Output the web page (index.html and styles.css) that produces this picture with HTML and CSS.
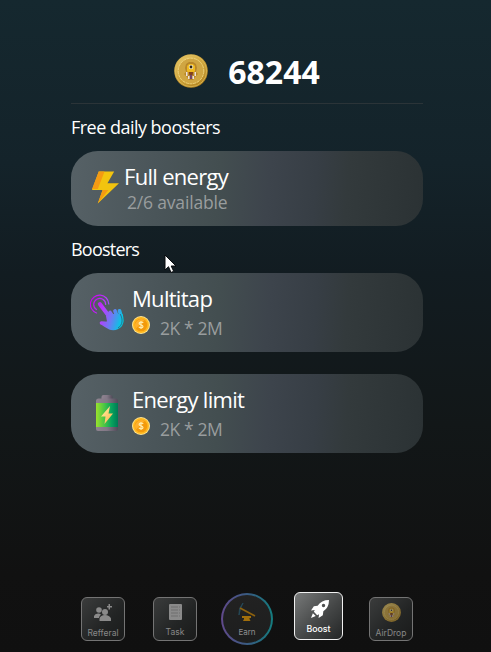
FILE: index.html
```html
<!DOCTYPE html>
<html lang="en">
<head>
<meta charset="utf-8">
<title>Boost</title>
<link rel="stylesheet" href="styles.css">
</head>
<body>
<svg class="defs" aria-hidden="true">
  <defs>
    <radialGradient id="gold" cx=".4" cy=".35" r=".7"><stop offset="0" stop-color="#f4dc83"/><stop offset=".65" stop-color="#d0a53c"/><stop offset="1" stop-color="#a97916"/></radialGradient>
    <linearGradient id="hand" x1="0" x2="34" y1="10" y2="20" gradientUnits="userSpaceOnUse"><stop offset="0" stop-color="#c900ef"/><stop offset=".4" stop-color="#b83cff"/><stop offset=".68" stop-color="#7078f4"/><stop offset="1" stop-color="#00cbe2"/></linearGradient>
    <linearGradient id="green"><stop offset="0" stop-color="#9be22c"/><stop offset=".4" stop-color="#45c447"/><stop offset=".7" stop-color="#08a45d"/><stop offset="1" stop-color="#007a55"/></linearGradient>
    <linearGradient id="cap"><stop offset="0" stop-color="#8f8390"/><stop offset=".5" stop-color="#827886"/><stop offset="1" stop-color="#514b59"/></linearGradient>
    <linearGradient id="spark" x1="0" x2="1" y1="0" y2="1"><stop offset="0" stop-color="#fff6a8"/><stop offset="1" stop-color="#ffac45"/></linearGradient>
    <symbol id="medal" viewBox="0 0 34 34">
      <circle cx="17" cy="17" r="16.8" fill="url(#gold)"/>
      <circle cx="17" cy="17" r="15.7" fill="none" stroke="#dfc063" stroke-width=".7"/>
      <circle cx="17" cy="17" r="12.8" fill="#d0a642" stroke="#efd680" stroke-width=".9" stroke-dasharray="3 .7"/>
      <path d="M11 14l1-4 3-2h4l3 2 1 4-1 4 2 2-3 3-2 3h-4l-2-3-3-3 2-2z" fill="#b88628"/>
      <path d="M13 17v-5l2-2h4l2 2v5l-2 3h-4z" fill="#efb91f"/>
      <circle cx="17" cy="13" r="2.3" fill="#f5e9bd"/><circle cx="17" cy="13" r="1.4" fill="#312516"/>
      <path d="M12 18h1.5v4H12zm8.5 0H22v4h-1.500zM14 22h1.500v3H14zm4.500 0H20v3h-1.500z" fill="#eee2dc"/>
      <path d="M14.500 18h5l-1 3h-3z" fill="#82411e"/><path d="M16 21h2v4h-2z" fill="#744765"/>
    </symbol>
    <symbol id="dollar" viewBox="0 0 18 18">
      <circle cx="9" cy="9" r="9" fill="#ffe491"/><circle cx="9" cy="9" r="8" fill="#ffb820"/><circle cx="9" cy="9" r="6.300" fill="#f39a0c"/><path d="M4 12.500A6.200 6.200 0 0 1 12.500 4z" fill="#ffb02c"/>
      <path d="M11.200 7C10.600 5.900 7.200 5.700 7.100 7.300c-.1 1.900 4 1.300 3.900 3.300-.1 1.700-3.400 1.600-4.200.2M9 5v8" fill="none" stroke="#ffeaa8" stroke-width="1.200"/>
    </symbol>
  </defs>
</svg>
<main>
  <header class="balance">
    <svg class="medal"><use href="#medal"/></svg>
    <strong>68244</strong>
  </header>
  <h2 class="free">Free daily boosters</h2>
  <section class="card daily">
    <svg class="bolt" viewBox="0 0 28 34"><path d="M7 0H23L16 12H28L6 33 11 19H0z" fill="#f2c40f"/><path d="M7 0H13L6 18H0zM11 19H17L6 33z" fill="#f49a13"/></svg>
    <div><h3>Full energy</h3><p>2/6 available</p></div>
  </section>
  <h2 class="paid">Boosters</h2>
  <section class="card">
    <svg class="tap" viewBox="0 0 35 38">
      <g fill="none" stroke="url(#hand)" stroke-linecap="round">
        <path d="M6.500 19A9.200 9.200 0 1 1 18.800 10M6.500 15.500A6 6 0 1 1 15.700 10.400" stroke-width="1.200"/>
        <path d="M9.800 10L20 23.500" stroke-width="4"/>
        <path d="M20 18.500L23 23M25 17L27 22M29.500 16.800L31 22" stroke-width="3.700"/>
        <path d="M11.500 29L18 29.500" stroke-width="3.600"/>
      </g>
      <path d="M16 22l4-2 12.500 0q2.500 7-.5 12-4 5-11 4-3-.6-10-5.500l6-3z" fill="url(#hand)"/>
      <path d="M30.200 20c3 5.500 2.500 11-2.200 14" fill="none" stroke="#3a5c79" stroke-width=".8"/>
    </svg>
    <div><h3 class="multi">Multitap</h3><p class="price"><svg class="coin"><use href="#dollar"/></svg><span>2K * 2M</span></p></div>
  </section>
  <section class="card">
    <svg class="battery" viewBox="0 0 22 36">
      <path d="M5.500 4V2q0-2 2-2h7q2 0 2 2v2z" fill="url(#cap)"/><path d="M0 9V6q0-2.500 2.500-2.500h17Q22 3.500 22 6v3z" fill="url(#cap)"/>
      <path d="M0 8h22v24H0z" fill="url(#green)"/><path d="M0 32h22v2q0 2-2 2H2q-2 0-2-2z" fill="url(#cap)"/>
      <path d="M14 11L5 21.500h4.500L8.500 29l8.500-10.500h-4.500z" fill="url(#spark)"/>
    </svg>
    <div><h3 class="limit">Energy limit</h3><p class="price"><svg class="coin"><use href="#dollar"/></svg><span>2K * 2M</span></p></div>
  </section>
</main>
<nav>
  <a class="tile referral"><svg viewBox="0 0 18 18"><circle cx="5" cy="6" r="2.800"/><circle cx="11" cy="8" r="3"/><path d="M0 14v-2q1-3 5-2.500l2 1q-2 1.500-2 3.500zM5.500 17v-2.500q1-3.500 5.500-3.500t6 3.500V17zM13 2h1.500V0H16v2h2v1.500h-2v2h-1.500v-2H13z"/></svg><span>Refferal</span></a>
  <a class="tile task"><svg viewBox="0 0 13 17"><path d="M1 0h11q1 0 1 1v14q0 1-1 1H1q-1 0-1-1V1q0-1 1-1z"/><path d="M2 3h7m1 0h1M2 6h7m1 0h1M2 9h7m1 0h1M2 12h7m1 0h1" stroke="#686868" stroke-width=".8"/></svg><span>Task</span></a>
  <a class="earn"><svg viewBox="0 0 18 19"><path d="M1 12Q0 5 5 0 2 5 1 12" stroke="#254958" fill="none" stroke-width="1"/><path d="M2 5L17 13" stroke="#8d610e" stroke-width="1.700"/><path d="M4 13h9v2h-1.500v1l1 2H5l1-2v-1H4z" fill="#a16e0b"/></svg><span>Earn</span></a>
  <a class="tile boost"><svg viewBox="0 0 19 19"><path fill-rule="evenodd" d="M19 0Q11 0 7 6L3 6.500 0 11l4-.5-1 2L6.500 16l2-1L8 19l4.500-3 .5-4Q19 8 19 0zM13.200 4A1.800 1.800 0 1 1 13.200 7.600 1.800 1.800 0 1 1 13.200 4M2 14l-2 5 5-2z"/></svg><span>Boost</span></a>
  <a class="tile airdrop"><svg><use href="#medal"/></svg><span>AirDrop</span></a>
</nav>
<svg class="cursor" viewBox="0 0 13 20"><path d="M1 1v15l3.500-3.300L7 18.500l2.700-1.200L7.200 12H12z" fill="#fff" stroke="#080b0d"/></svg>
</body>
</html>
```
FILE: styles.css
```css
* { box-sizing: border-box; }
body {
  margin: 0;
  height: 652px;
  overflow: hidden;
  display: flex;
  flex-direction: column;
  position: relative;
  font-family: "Open Sans", "Noto Sans", sans-serif;
  color: #fff;
  background: linear-gradient(#15282f 0, #14232a 25%, #121c21 42%, #121718 65%, #111 88%, #101010 100%);
}
svg { display: block; flex: none; }
.defs { position: absolute; width: 0; height: 0; }
main { width: 352px; margin-left: 71px; }
h2, h3, p { margin: 0; font-weight: 400; white-space: nowrap; }
.balance {
  height: 104px;
  padding: 38px 0 0;
  display: flex;
  justify-content: center;
  gap: 20px;
  border-bottom: 1px solid #2b3438;
}
.medal { width: 34px; height: 34px; margin-top: 16px; }
.balance strong { font-size: 32px; line-height: 68px; font-weight: 700; }
h2 { font-size: 18px; line-height: 47px; }
.free { letter-spacing: -.52px; }
.paid { letter-spacing: -.78px; }
.card {
  height: 79px;
  border-radius: 27px;
  padding: 11px 0 0 19px;
  display: flex;
  background: linear-gradient(95deg, #566166 0%, #4a5559 25%, #434e50 42%, #3d444c 56%, #373e45 69%, #333a3c 78%, #2b3234 100%);
}
.card + .card { margin-top: 22px; }
.daily { height: 75px; padding-left: 21px; }
.bolt { width: 27px; height: 34px; margin: 9px 5px 0 0; }
h3 { font-size: 22px; line-height: 28px; letter-spacing: -.7px; }
p { font-size: 17.5px; line-height: 24px; color: #999d9e; letter-spacing: -.4px; }
.daily p { padding-left: 3px; letter-spacing: -.18px; }
.tap { width: 35px; height: 38px; margin: 10px 7px 0 0; }
.battery { width: 22px; height: 36px; margin: 10px 14px 0 6px; }
.price { display: flex; gap: 10px; padding-top: 4px; }
.coin { width: 18px; height: 18px; }
nav { margin-top: auto; height: 59px; padding-left: 81px; display: flex; align-items: flex-start; }
nav span { font-family: Inter, sans-serif; font-size: 8.5px; line-height: 12px; }
nav a { display: flex; flex-direction: column; align-items: center; }
.tile {
  width: 44px;
  height: 44px;
  margin-top: 4px;
  border: 1px solid #747474;
  border-radius: 6px;
  color: #888;
  fill: #8a8a8a;
  background: linear-gradient(135deg, #3b3c3c, #222424 60%, #1a1b1b);
}
.referral svg { width: 18px; height: 18px; margin-top: 6px; }
.referral span { margin-top: 5px; }
.task { margin-left: 28px; }
.task svg { width: 13px; height: 17px; margin-top: 6px; }
.task span { margin-top: 5px; }
.earn {
  width: 52px;
  height: 52px;
  margin-left: 24px;
  border: 2px solid transparent;
  border-radius: 50%;
  background: linear-gradient(#222, #1d1e1e) padding-box, linear-gradient(90deg, #61498b, #315f80 60%, #147d7f) border-box;
  color: #8f8f8f;
}
.earn svg { width: 18px; height: 19px; margin-top: 8px; }
.earn span { margin-top: 4px; font-size: 8px; }
.boost {
  width: 49px;
  height: 48px;
  margin: -1px 0 0 21px;
  border: 1.5px solid #f1f1f1;
  color: #fff;
  fill: #fff;
  background: linear-gradient(135deg, #777979, #454747 55%, #242626);
}
.boost svg { width: 18px; height: 18px; margin: 7px 0 0 2px; }
.boost span { margin-top: 5px; font-size: 8.8px; font-weight: 500; }
.airdrop { margin-left: 26px; }
.airdrop svg { width: 19px; height: 19px; margin-top: 5px; opacity: .58; }
.airdrop span { margin-top: 5px; }
.cursor { position: absolute; left: 164px; top: 254px; width: 13px; height: 20px; }
```
